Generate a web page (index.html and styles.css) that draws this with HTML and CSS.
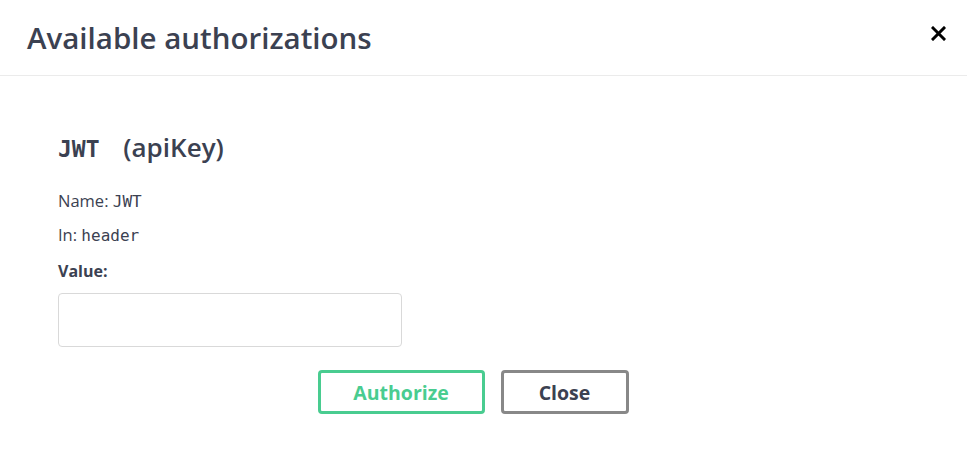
FILE: index.html
```html
<!DOCTYPE html>
<html lang="en">

<head>
    <meta charset="UTF-8" />
    <meta name="viewport" content="width=device-width, initial-scale=1.0" />
    <title>Available authorizations</title>
    <link rel="stylesheet" href="styles.css">
</head>

<body>
    <div class="modal">
        <div class="modal-header">
            <h3 class="modal-title">Available authorizations</h3>
            <button class="close-modal" aria-label="Close">
                <svg width="15" height="15" viewBox="0 0 15 15">
                    <path d="M2 2 L13 13 M13 2 L2 13" stroke="#000" stroke-width="3" stroke-linecap="square" />
                </svg>
            </button>
        </div>

        <div class="modal-body">
            <form class="auth-container">
                <h4><code>JWT</code> (apiKey)</h4>
                <p class="row">Name: <code>JWT</code></p>
                <p class="row">In: <code>header</code></p>
                <label class="field-label" for="jwt-value">Value:</label>
                <input type="text" id="jwt-value" class="value-input" />
                <div class="auth-btn-wrapper">
                    <button type="button" class="btn authorize">Authorize</button>
                    <button type="button" class="btn btn-done">Close</button>
                </div>
            </form>
        </div>
    </div>
</body>

</html>
```

FILE: styles.css
```css
body {
    margin: 0;
    background: #fff;
    font-family: "Open Sans", "Noto Sans", sans-serif;
    color: #3b4151;
}

.modal {
    width: 967px;
}

.modal-header {
    display: flex;
    align-items: center;
    justify-content: space-between;
    height: 76px;
    padding: 0 27px;
    border-bottom: 1px solid #ebebeb;
    box-sizing: border-box;
}

.modal-title {
    margin: 0;
    font-size: 29.5px;
    font-weight: 600;
    color: #3b4151;
}

.close-modal {
    border: none;
    background: none;
    padding: 0;
    margin-right: -6px;
    margin-top: -8px;
    cursor: pointer;
    display: flex;
}

.modal-body {
    padding: 53px 58px 40px;
}

.auth-container h4 {
    margin: 0 0 25px;
    font-size: 26px;
    font-weight: 600;
    color: #3b4151;
}

code {
    font-family: "DejaVu Sans Mono", monospace;
}

.auth-container h4 code {
    font-size: 23px;
    font-weight: 600;
    margin-right: 17px;
}

.row {
    margin: 0 0 11px;
    font-size: 16.5px;
    line-height: 22px;
}

.row code {
    font-size: 16px;
}

.field-label {
    display: block;
    font-size: 16px;
    font-weight: 700;
    margin: 13px 0 11px;
}

.value-input {
    display: block;
    width: 344px;
    height: 54px;
    box-sizing: border-box;
    border: 1px solid #d9d9d9;
    border-radius: 4px;
    padding: 8px 10px;
    font-size: 15px;
}

.auth-btn-wrapper {
    display: flex;
    justify-content: center;
    gap: 16px;
    margin-top: 23px;
    width: 830px;
}

.btn {
    height: 44px;
    border-radius: 4px;
    background: transparent;
    font-family: "Open Sans", "Noto Sans", sans-serif;
    font-size: 19.5px;
    font-weight: 700;
    cursor: pointer;
    box-sizing: border-box;
}

.authorize {
    width: 167px;
    border: 3px solid #49cc90;
    color: #49cc90;
}

.btn-done {
    width: 128px;
    border: 3px solid #888;
    color: #3b4151;
}
```
